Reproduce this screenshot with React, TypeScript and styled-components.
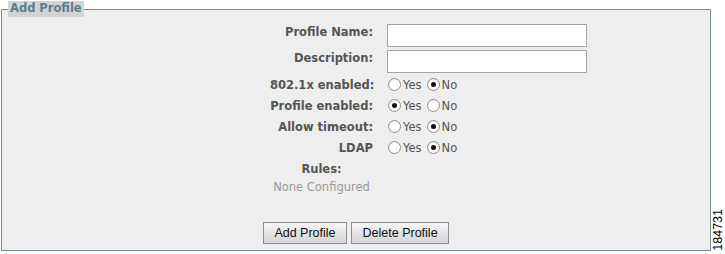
import React, { useState } from "react";
import styled, { createGlobalStyle } from "styled-components";

const GlobalStyle = createGlobalStyle`
  html, body {
    margin: 0;
    padding: 0;
    background: #ffffff;
  }
  body {
    font-family: "DejaVu Sans", Verdana, sans-serif;
  }
`;

const Page = styled.div`
  display: flex;
  height: 254px;
  padding: 1px 0 0 1px;
  box-sizing: border-box;
`;

const Frame = styled.fieldset`
  box-sizing: border-box;
  width: 710px;
  height: 250px;
  margin: 0;
  padding: 0;
  border: 1px solid #708c96;
  background: #eeeeee;
  display: flex;
  flex-direction: column;
`;

const FrameTitle = styled.legend`
  margin-left: 6px;
  padding: 0 2px 0 2px;
  height: 16px;
  line-height: 16px;
  background: #d3d3d3;
  color: #5b7d91;
  font: bold 11.5px "DejaVu Sans", Verdana, sans-serif;
`;

const Form = styled.div`
  display: flex;
  flex-direction: column;
  padding: 5px 0 0 268px;
`;

const Row = styled.div<{ $h: number; $top?: boolean }>`
  display: grid;
  grid-template-columns: 103px 200px;
  column-gap: 14px;
  align-items: ${({ $top }) => ($top ? "start" : "center")};
  height: ${({ $h }) => $h}px;
`;

const Label = styled.div<{ $center?: boolean; $pad?: number }>`
  text-align: ${({ $center }) => ($center ? "center" : "right")};
  padding-top: ${({ $pad }) => $pad ?? 0}px;
  font: bold 11.5px "DejaVu Sans", Verdana, sans-serif;
  color: #555555;
  white-space: nowrap;
`;

const Note = styled.div`
  text-align: center;
  font: 11.5px "DejaVu Sans", Verdana, sans-serif;
  color: #999999;
  white-space: nowrap;
`;

const TextInput = styled.input`
  box-sizing: border-box;
  width: 200px;
  height: 23px;
  margin: 2px 0 0;
  border: 1px solid #a4a4a4;
  background: #ffffff;
  padding: 0 3px;
  font: 11px "DejaVu Sans", Verdana, sans-serif;
  outline: none;
`;

const Choices = styled.div`
  display: flex;
  align-items: center;
  margin-left: 1px;
`;

const Choice = styled.label`
  display: flex;
  align-items: center;
  gap: 2px;
  margin-right: 5px;
  font: 11.5px "DejaVu Sans", Verdana, sans-serif;
  color: #555555;
  cursor: pointer;
`;

const Dot = styled.span<{ $on: boolean }>`
  box-sizing: border-box;
  width: 13px;
  height: 13px;
  border-radius: 50%;
  border: 1px solid #8e8e8e;
  background: radial-gradient(circle at 60% 65%, #ffffff 45%, #e4e4e4 100%);
  display: flex;
  align-items: center;
  justify-content: center;

  &::after {
    content: "";
    width: 5px;
    height: 5px;
    border-radius: 50%;
    background: #111111;
    display: ${({ $on }) => ($on ? "block" : "none")};
  }
`;

const Actions = styled.div`
  display: flex;
  justify-content: center;
  gap: 4px;
  margin-top: 27px;
`;

const Button = styled.button`
  box-sizing: border-box;
  height: 22px;
  padding: 0 10.5px;
  margin: 0;
  border: 1px solid #8f8f8f;
  border-radius: 0;
  background: linear-gradient(#f7f7f7, #e2e2e2 55%, #d6d6d6);
  color: #111111;
  font: 12.5px "Liberation Sans", Arial, sans-serif;
  cursor: pointer;
`;

const Side = styled.div`
  flex: 1;
  display: flex;
  align-items: flex-end;
  justify-content: center;
  padding-bottom: 3px;
`;

const FigureId = styled.span`
  writing-mode: vertical-rl;
  transform: rotate(180deg);
  font: 12.5px "Liberation Sans", Arial, sans-serif;
  color: #000000;
  line-height: 12px;
`;

type YesNo = "yes" | "no";

const RadioPair: React.FC<{ value: YesNo; onChange: (v: YesNo) => void }> = ({
  value,
  onChange,
}) => (
  <Choices>
    <Choice onClick={() => onChange("yes")}>
      <Dot $on={value === "yes"} />
      Yes
    </Choice>
    <Choice onClick={() => onChange("no")}>
      <Dot $on={value === "no"} />
      No
    </Choice>
  </Choices>
);

export default function App() {
  const [name, setName] = useState("");
  const [description, setDescription] = useState("");
  const [flags, setFlags] = useState<Record<string, YesNo>>({
    dot1x: "no",
    enabled: "yes",
    timeout: "no",
    ldap: "no",
  });

  const setFlag = (key: string) => (v: YesNo) =>
    setFlags({ ...flags, [key]: v });

  return (
    <>
      <GlobalStyle />
      <Page>
        <Frame>
          <FrameTitle>Add Profile</FrameTitle>
          <Form>
            <Row $h={26} $top>
              <Label $pad={3}>Profile Name:</Label>
              <TextInput value={name} onChange={(e) => setName(e.target.value)} />
            </Row>
            <Row $h={26} $top>
              <Label $pad={3}>Description:</Label>
              <TextInput
                value={description}
                onChange={(e) => setDescription(e.target.value)}
              />
            </Row>
            <Row $h={21}>
              <Label>802.1x enabled:</Label>
              <RadioPair value={flags.dot1x} onChange={setFlag("dot1x")} />
            </Row>
            <Row $h={21}>
              <Label>Profile enabled:</Label>
              <RadioPair value={flags.enabled} onChange={setFlag("enabled")} />
            </Row>
            <Row $h={21}>
              <Label>Allow timeout:</Label>
              <RadioPair value={flags.timeout} onChange={setFlag("timeout")} />
            </Row>
            <Row $h={21}>
              <Label>LDAP</Label>
              <RadioPair value={flags.ldap} onChange={setFlag("ldap")} />
            </Row>
            <Row $h={21}>
              <Label $center>Rules:</Label>
            </Row>
            <Row $h={16}>
              <Note>None Configured</Note>
            </Row>
          </Form>
          <Actions>
            <Button>Add Profile</Button>
            <Button>Delete Profile</Button>
          </Actions>
        </Frame>
        <Side>
          <FigureId>184731</FigureId>
        </Side>
      </Page>
    </>
  );
}
